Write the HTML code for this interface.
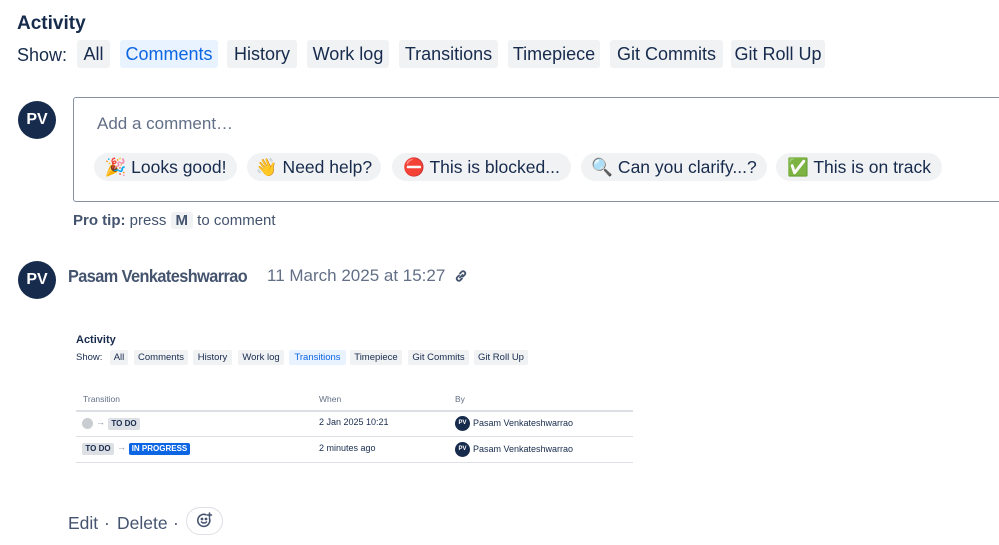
<!DOCTYPE html>
<html><head><style>
*{margin:0;padding:0;box-sizing:border-box}
body{width:999px;height:545px;overflow:hidden;background:#fff;font-family:"Liberation Sans",sans-serif;color:#172b4d;position:relative}
.a{position:absolute;white-space:nowrap}
.tab{position:absolute;top:40px;height:28px;line-height:28px;font-size:18px;background:#f1f2f4;border-radius:3px;text-align:center;color:#172b4d}
.chip{position:absolute;top:153px;height:28px;line-height:28px;font-size:17.5px;background:#f1f2f4;border-radius:14px;text-align:center;color:#172b4d}
.av{position:absolute;border-radius:50%;background:#172b4d;color:#fff;text-align:center;font-weight:bold}
.st{position:absolute;top:350px;height:15px;line-height:15px;font-size:9.5px;background:#f1f2f4;border-radius:2px;text-align:center}
.lz{font-size:9px;color:#172b4d}
.lbl{position:absolute;height:12px;line-height:12px;font-size:8px;font-weight:bold;border-radius:2px;text-align:center}
</style></head><body>
<div class="a" style="left:17px;top:13px;font-size:19px;font-weight:bold">Activity</div>
<div class="a" style="left:17px;top:45px;font-size:18px">Show:</div>
<div class="tab" style="left:77px;width:33px">All</div>
<div class="tab" style="left:120px;width:98px;background:#e9f2ff;color:#0c66e4">Comments</div>
<div class="tab" style="left:227px;width:70px">History</div>
<div class="tab" style="left:307px;width:82px">Work log</div>
<div class="tab" style="left:399px;width:99px">Transitions</div>
<div class="tab" style="left:508px;width:92px">Timepiece</div>
<div class="tab" style="left:610px;width:113px">Git Commits</div>
<div class="tab" style="left:731px;width:94px">Git Roll Up</div>

<div class="av" style="left:18px;top:101px;width:38px;height:38px;line-height:38px;font-size:16px">PV</div>
<div class="a" style="left:73px;top:97px;width:940px;height:105px;border:1px solid #8590a2;border-radius:3px"></div>
<div class="a" style="left:97px;top:114px;font-size:17px;color:#626f86">Add a comment…</div>
<div class="chip" style="left:94px;width:143px">🎉 Looks good!</div>
<div class="chip" style="left:247px;width:134px">👋 Need help?</div>
<div class="chip" style="left:392px;width:179px">⛔ This is blocked...</div>
<div class="chip" style="left:581px;width:186px">🔍 Can you clarify...?</div>
<div class="chip" style="left:776px;width:166px">✅ This is on track</div>
<div class="a" style="left:73px;top:212px;font-size:15px;color:#44546f"><b>Pro tip:</b> press <span style="display:inline-block;background:#f1f2f4;padding:0 5px;border-radius:3px;font-weight:bold">M</span> to comment</div>

<div class="av" style="left:18px;top:261px;width:38px;height:38px;line-height:38px;font-size:16px">PV</div>
<div class="a" style="left:68px;top:266px;font-size:17.5px;color:#44546f;font-weight:bold;letter-spacing:-0.6px;transform:scaleX(0.93);transform-origin:left">Pasam Venkateshwarrao</div>
<div class="a" style="left:267px;top:266px;font-size:17px;color:#626f86">11 March 2025 at 15:27</div>
<svg class="a" style="left:453px;top:268px" width="16" height="16" viewBox="0 0 16 16" fill="none" stroke="#44546f" stroke-width="1.8" stroke-linecap="round"><path d="M7 9.5 9.5 7M6 7.5 4 9.5a2.2 2.2 0 0 0 3 3l2-2M10 8.5l2-2a2.2 2.2 0 0 0-3-3L7 5.5"/></svg>

<div class="a" style="left:76px;top:334px;font-size:11px;font-weight:bold">Activity</div>
<div class="a" style="left:76px;top:352px;font-size:9.5px">Show:</div>
<div class="st" style="left:110px;width:18px">All</div>
<div class="st" style="left:134px;width:54px">Comments</div>
<div class="st" style="left:193px;width:39px">History</div>
<div class="st" style="left:238px;width:46px">Work log</div>
<div class="st" style="left:289px;width:57px;background:#e9f2ff;color:#0c66e4">Transitions</div>
<div class="st" style="left:350px;width:52px">Timepiece</div>
<div class="st" style="left:408px;width:61px">Git Commits</div>
<div class="st" style="left:474px;width:54px">Git Roll Up</div>
<div class="a" style="left:83px;top:394px;font-size:8.5px;color:#626f86">Transition</div>
<div class="a" style="left:319px;top:394px;font-size:8.5px;color:#626f86">When</div>
<div class="a" style="left:455px;top:394px;font-size:8.5px;color:#626f86">By</div>
<div class="a" style="left:76px;top:410px;width:557px;height:2px;background:#dcdfe4"></div>
<div class="a" style="left:76px;top:436px;width:557px;height:1px;background:#dcdfe4"></div>
<div class="a" style="left:76px;top:462px;width:557px;height:1px;background:#dcdfe4"></div>
<div class="a" style="left:82px;top:418px;width:11px;height:11px;border-radius:50%;background:#c9ccd1"></div>
<div class="a" style="left:96px;top:417px;font-size:9px;color:#8590a2">→</div>
<div class="lbl" style="left:108px;top:418px;width:32px;background:#dcdfe4">TO DO</div>
<div class="lbl" style="left:82px;top:443px;width:32px;background:#dcdfe4">TO DO</div>
<div class="a" style="left:117px;top:442px;font-size:9px;color:#8590a2">→</div>
<div class="lbl" style="left:129px;top:443px;width:61px;background:#0c66e4;color:#fff">IN PROGRESS</div>
<div class="a lz" style="left:319px;top:417px">2 Jan 2025 10:21</div>
<div class="a lz" style="left:319px;top:443px">2 minutes ago</div>
<div class="av" style="left:455px;top:416px;width:15px;height:15px;line-height:15px;font-size:6px">PV</div>
<div class="av" style="left:455px;top:442px;width:15px;height:15px;line-height:15px;font-size:6px">PV</div>
<div class="a lz" style="left:473px;top:418px">Pasam Venkateshwarrao</div>
<div class="a lz" style="left:473px;top:444px">Pasam Venkateshwarrao</div>

<div class="a" style="left:68px;top:513px;font-size:17.5px;color:#44546f">Edit</div>
<div class="a" style="left:104px;top:513px;font-size:17.5px;color:#44546f">·</div>
<div class="a" style="left:117px;top:513px;font-size:17.5px;color:#44546f">Delete</div>
<div class="a" style="left:173px;top:513px;font-size:17.5px;color:#44546f">·</div>
<div class="a" style="left:186px;top:507px;width:37px;height:28px;border:1px solid #dcdfe4;border-radius:14px"></div>
<svg class="a" style="left:196px;top:512px" width="17" height="17" viewBox="0 0 17 17" fill="none" stroke="#44546f" stroke-width="1.6" stroke-linecap="round"><path d="M13.5 6.5A6 6 0 1 1 10 2.8"/><path d="M5.5 10a3.5 3.5 0 0 0 5 0"/><circle cx="6" cy="7" r=".6" fill="#44546f"/><circle cx="10" cy="7" r=".6" fill="#44546f"/><path d="M13.5 1v4M11.5 3h4"/></svg>
</body></html>
